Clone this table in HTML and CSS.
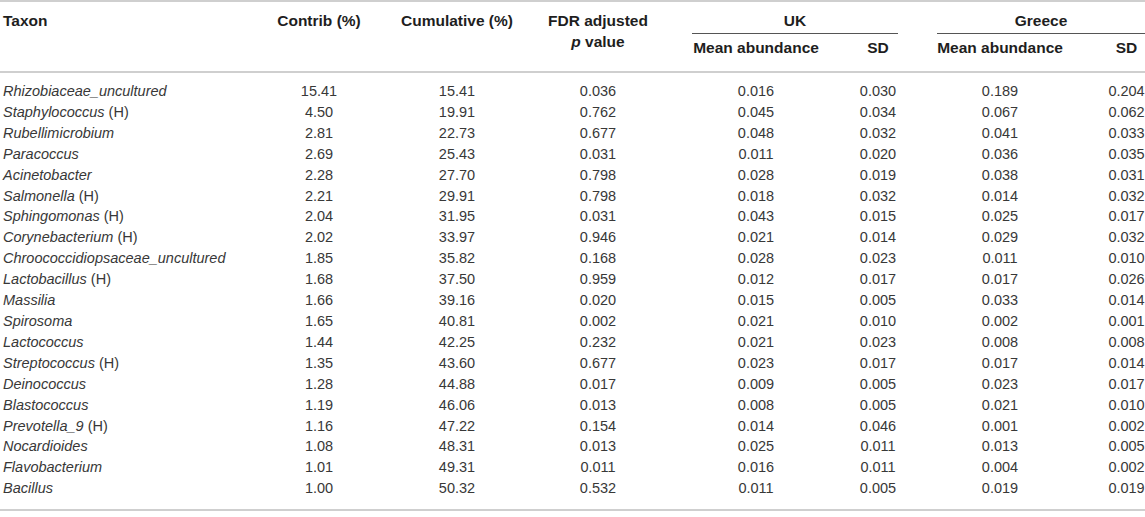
FILE: index.html
```html
<html>
<head>
<link rel="stylesheet" href="styles.css">
</head>
<body>
<div class="wrap">
<table class="taxa">
	<colgroup>
		<col class="c-taxon">
		<col class="c-contrib">
		<col class="c-cum">
		<col class="c-fdr">
		<col class="c-mean">
		<col class="c-sd">
		<col class="c-mean2">
		<col class="c-sd2">
	</colgroup>
	<thead>
		<tr class="head-top">
			<th rowspan="2" class="left">Taxon</th>
			<th rowspan="2">Contrib (%)</th>
			<th rowspan="2">Cumulative (%)</th>
			<th rowspan="2">FDR adjusted<br><i>p</i> value</th>
			<th colspan="2" class="group"><div class="uk">UK</div></th>
			<th colspan="2" class="group"><div class="gr">Greece</div></th>
		</tr>
		<tr class="head-sub">
			<th>Mean abundance</th>
			<th>SD</th>
			<th>Mean abundance</th>
			<th class="last">SD</th>
		</tr>
	</thead>
	<tbody>
		<tr><td class="left"><i>Rhizobiaceae_uncultured</i></td><td>15.41</td><td>15.41</td><td>0.036</td><td>0.016</td><td>0.030</td><td>0.189</td><td class="last">0.204</td></tr>
		<tr><td class="left"><i>Staphylococcus</i> (H)</td><td>4.50</td><td>19.91</td><td>0.762</td><td>0.045</td><td>0.034</td><td>0.067</td><td class="last">0.062</td></tr>
		<tr><td class="left"><i>Rubellimicrobium</i></td><td>2.81</td><td>22.73</td><td>0.677</td><td>0.048</td><td>0.032</td><td>0.041</td><td class="last">0.033</td></tr>
		<tr><td class="left"><i>Paracoccus</i></td><td>2.69</td><td>25.43</td><td>0.031</td><td>0.011</td><td>0.020</td><td>0.036</td><td class="last">0.035</td></tr>
		<tr><td class="left"><i>Acinetobacter</i></td><td>2.28</td><td>27.70</td><td>0.798</td><td>0.028</td><td>0.019</td><td>0.038</td><td class="last">0.031</td></tr>
		<tr><td class="left"><i>Salmonella</i> (H)</td><td>2.21</td><td>29.91</td><td>0.798</td><td>0.018</td><td>0.032</td><td>0.014</td><td class="last">0.032</td></tr>
		<tr><td class="left"><i>Sphingomonas</i> (H)</td><td>2.04</td><td>31.95</td><td>0.031</td><td>0.043</td><td>0.015</td><td>0.025</td><td class="last">0.017</td></tr>
		<tr><td class="left"><i>Corynebacterium</i> (H)</td><td>2.02</td><td>33.97</td><td>0.946</td><td>0.021</td><td>0.014</td><td>0.029</td><td class="last">0.032</td></tr>
		<tr><td class="left"><i>Chroococcidiopsaceae_uncultured</i></td><td>1.85</td><td>35.82</td><td>0.168</td><td>0.028</td><td>0.023</td><td>0.011</td><td class="last">0.010</td></tr>
		<tr><td class="left"><i>Lactobacillus</i> (H)</td><td>1.68</td><td>37.50</td><td>0.959</td><td>0.012</td><td>0.017</td><td>0.017</td><td class="last">0.026</td></tr>
		<tr><td class="left"><i>Massilia</i></td><td>1.66</td><td>39.16</td><td>0.020</td><td>0.015</td><td>0.005</td><td>0.033</td><td class="last">0.014</td></tr>
		<tr><td class="left"><i>Spirosoma</i></td><td>1.65</td><td>40.81</td><td>0.002</td><td>0.021</td><td>0.010</td><td>0.002</td><td class="last">0.001</td></tr>
		<tr><td class="left"><i>Lactococcus</i></td><td>1.44</td><td>42.25</td><td>0.232</td><td>0.021</td><td>0.023</td><td>0.008</td><td class="last">0.008</td></tr>
		<tr><td class="left"><i>Streptococcus</i> (H)</td><td>1.35</td><td>43.60</td><td>0.677</td><td>0.023</td><td>0.017</td><td>0.017</td><td class="last">0.014</td></tr>
		<tr><td class="left"><i>Deinococcus</i></td><td>1.28</td><td>44.88</td><td>0.017</td><td>0.009</td><td>0.005</td><td>0.023</td><td class="last">0.017</td></tr>
		<tr><td class="left"><i>Blastococcus</i></td><td>1.19</td><td>46.06</td><td>0.013</td><td>0.008</td><td>0.005</td><td>0.021</td><td class="last">0.010</td></tr>
		<tr><td class="left"><i>Prevotella_9</i> (H)</td><td>1.16</td><td>47.22</td><td>0.154</td><td>0.014</td><td>0.046</td><td>0.001</td><td class="last">0.002</td></tr>
		<tr><td class="left"><i>Nocardioides</i></td><td>1.08</td><td>48.31</td><td>0.013</td><td>0.025</td><td>0.011</td><td>0.013</td><td class="last">0.005</td></tr>
		<tr><td class="left"><i>Flavobacterium</i></td><td>1.01</td><td>49.31</td><td>0.011</td><td>0.016</td><td>0.011</td><td>0.004</td><td class="last">0.002</td></tr>
		<tr><td class="left"><i>Bacillus</i></td><td>1.00</td><td>50.32</td><td>0.532</td><td>0.011</td><td>0.005</td><td>0.019</td><td class="last">0.019</td></tr>
	</tbody>
</table>
</div>
</body>
</html>
```

FILE: styles.css
```css
body {
	margin: 0;
	background: #fff;
}
.wrap {
	width: 1145px;
	overflow: hidden;
}
.taxa {
	width: 1145px;
	table-layout: fixed;
	border-collapse: collapse;
	font-family: "Liberation Sans", Arial, sans-serif;
	font-size: 14.5px;
	line-height: 21px;
	color: #383838;
	border-top: 2px solid #cfcfcf;
	border-bottom: 2px solid #cfcfcf;
}
.c-taxon { width: 250px; }
.c-contrib { width: 138px; }
.c-cum { width: 138px; }
.c-fdr { width: 144px; }
.c-mean { width: 172px; }
.c-sd { width: 72px; }
.c-mean2 { width: 172px; }
.c-sd2 { width: 59px; }

.taxa th,
.taxa td {
	padding: 0;
	text-align: center;
	white-space: nowrap;
}
.taxa .left {
	text-align: left;
	padding-left: 3px;
}
.taxa .last {
	padding-left: 22px;
	padding-right: 0;
}
.taxa th {
	font-size: 15.5px;
	font-weight: bold;
	color: #1e1e1e;
	vertical-align: top;
}
thead {
	border-bottom: 2px solid #cfcfcf;
}
.head-top th {
	padding-top: 8px;
}
.group .uk,
.group .gr {
	border-bottom: 1px solid #555;
	padding-bottom: 2px;
}
.group .uk {
	margin: 0 16px 0 22px;
}
.group .gr {
	margin: 0 0 0 23px;
}
.head-sub th {
	padding-top: 3px;
	padding-bottom: 13px;
}
.head-sub th.last {
	padding-left: 22px;
}
.taxa td {
	line-height: 20.9px;
}
tbody tr:first-child td {
	padding-top: 8px;
}
tbody tr:last-child td {
	padding-bottom: 10px;
}
```
